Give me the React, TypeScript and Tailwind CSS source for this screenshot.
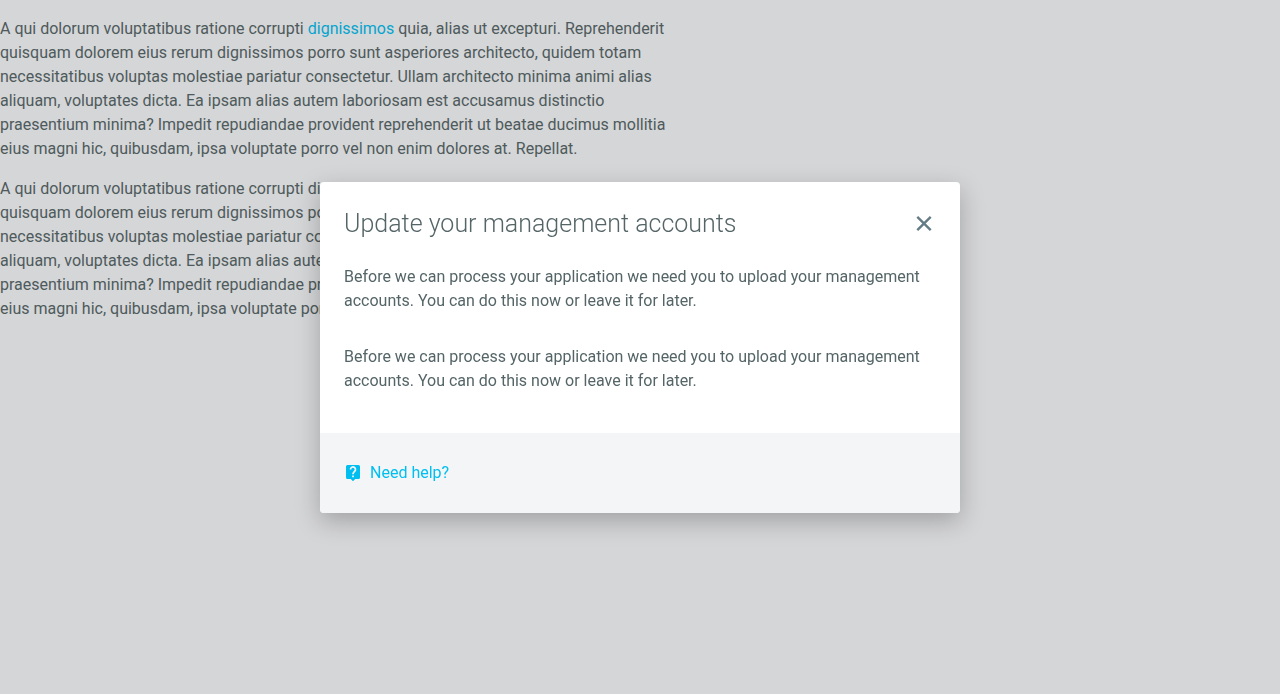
import React from 'react';

function Filler({ linked = false }: { linked?: boolean }) {
  return (
    <p>
      A qui dolorum voluptatibus ratione corrupti{' '}
      {linked ? <a className="text-[#00bcee]">dignissimos</a> : 'dignissimos'} quia, alias ut excepturi. Reprehenderit
      quisquam dolorem eius rerum dignissimos porro sunt asperiores architecto, quidem totam necessitatibus voluptas
      molestiae pariatur consectetur. Ullam architecto minima animi alias aliquam, voluptates dicta. Ea ipsam alias
      autem laboriosam est accusamus distinctio praesentium minima? Impedit repudiandae provident reprehenderit ut
      beatae ducimus mollitia eius magni hic, quibusdam, ipsa voluptate porro vel non enim dolores at. Repellat.
    </p>
  );
}

function CloseIcon() {
  return (
    <svg className="size-6 shrink-0" viewBox="0 0 24 24" fill="none" stroke="currentColor" strokeWidth="2.4">
      <path d="M5.3 4.8 18.7 18.2M18.7 4.8 5.3 18.2" />
    </svg>
  );
}

function HelpIcon() {
  return (
    <svg className="h-6 w-[18px] shrink-0" viewBox="0 0 18 24">
      <path
        fill="currentColor"
        d="M3.5 4h11A1.5 1.5 0 0 1 16 5.5v11a1.5 1.5 0 0 1-1.5 1.5H11.2L9 20.2 6.8 18H3.5A1.5 1.5 0 0 1 2 16.5V5.5A1.5 1.5 0 0 1 3.5 4Z"
      />
      <path d="M6.5 8.500a2.500 2.500 0 1 1 4.300 1.700C9.700 11.300 9 11.700 9 13.200" fill="none" stroke="#f4f5f7" strokeWidth="1.7" />
      <path d="M8.150 14.500h1.700v1.700H8.150z" fill="#f4f5f7" />
    </svg>
  );
}

export default function App() {
  return (
    <div className="h-screen overflow-hidden bg-[#f5f6f8] font-['Roboto',sans-serif] text-base leading-6 text-[#556567]">
      <main className="flex w-[672px] flex-col gap-4 pt-[17px]">
        <Filler linked />
        <Filler />
      </main>
      <div className="fixed inset-0 flex items-start justify-center bg-[#202020]/15 pt-[182px]">
        <section role="dialog" className="w-[640px] overflow-hidden rounded bg-white shadow-[0_8px_24px_rgba(0,0,0,0.25)]">
          <header className="flex items-center justify-between px-6 pt-[23px]">
            <h1 className="text-[25px] leading-[37px] font-light">Update your management accounts</h1>
            <button aria-label="Close" className="flex size-6 items-center justify-center text-[#667c85]">
              <CloseIcon />
            </button>
          </header>
          <div className="flex flex-col gap-8 px-6 pt-[23px] pb-10">
            <p>Before we can process your application we need you to upload your management accounts. You can do this now or leave it for later.</p>
            <p>Before we can process your application we need you to upload your management accounts. You can do this now or leave it for later.</p>
          </div>
          <footer className="flex h-20 items-center bg-[#f4f5f7] px-6">
            <a className="flex items-center gap-2 text-[#00bff0]">
              <HelpIcon />
              Need help?
            </a>
          </footer>
        </section>
      </div>
    </div>
  );
}
